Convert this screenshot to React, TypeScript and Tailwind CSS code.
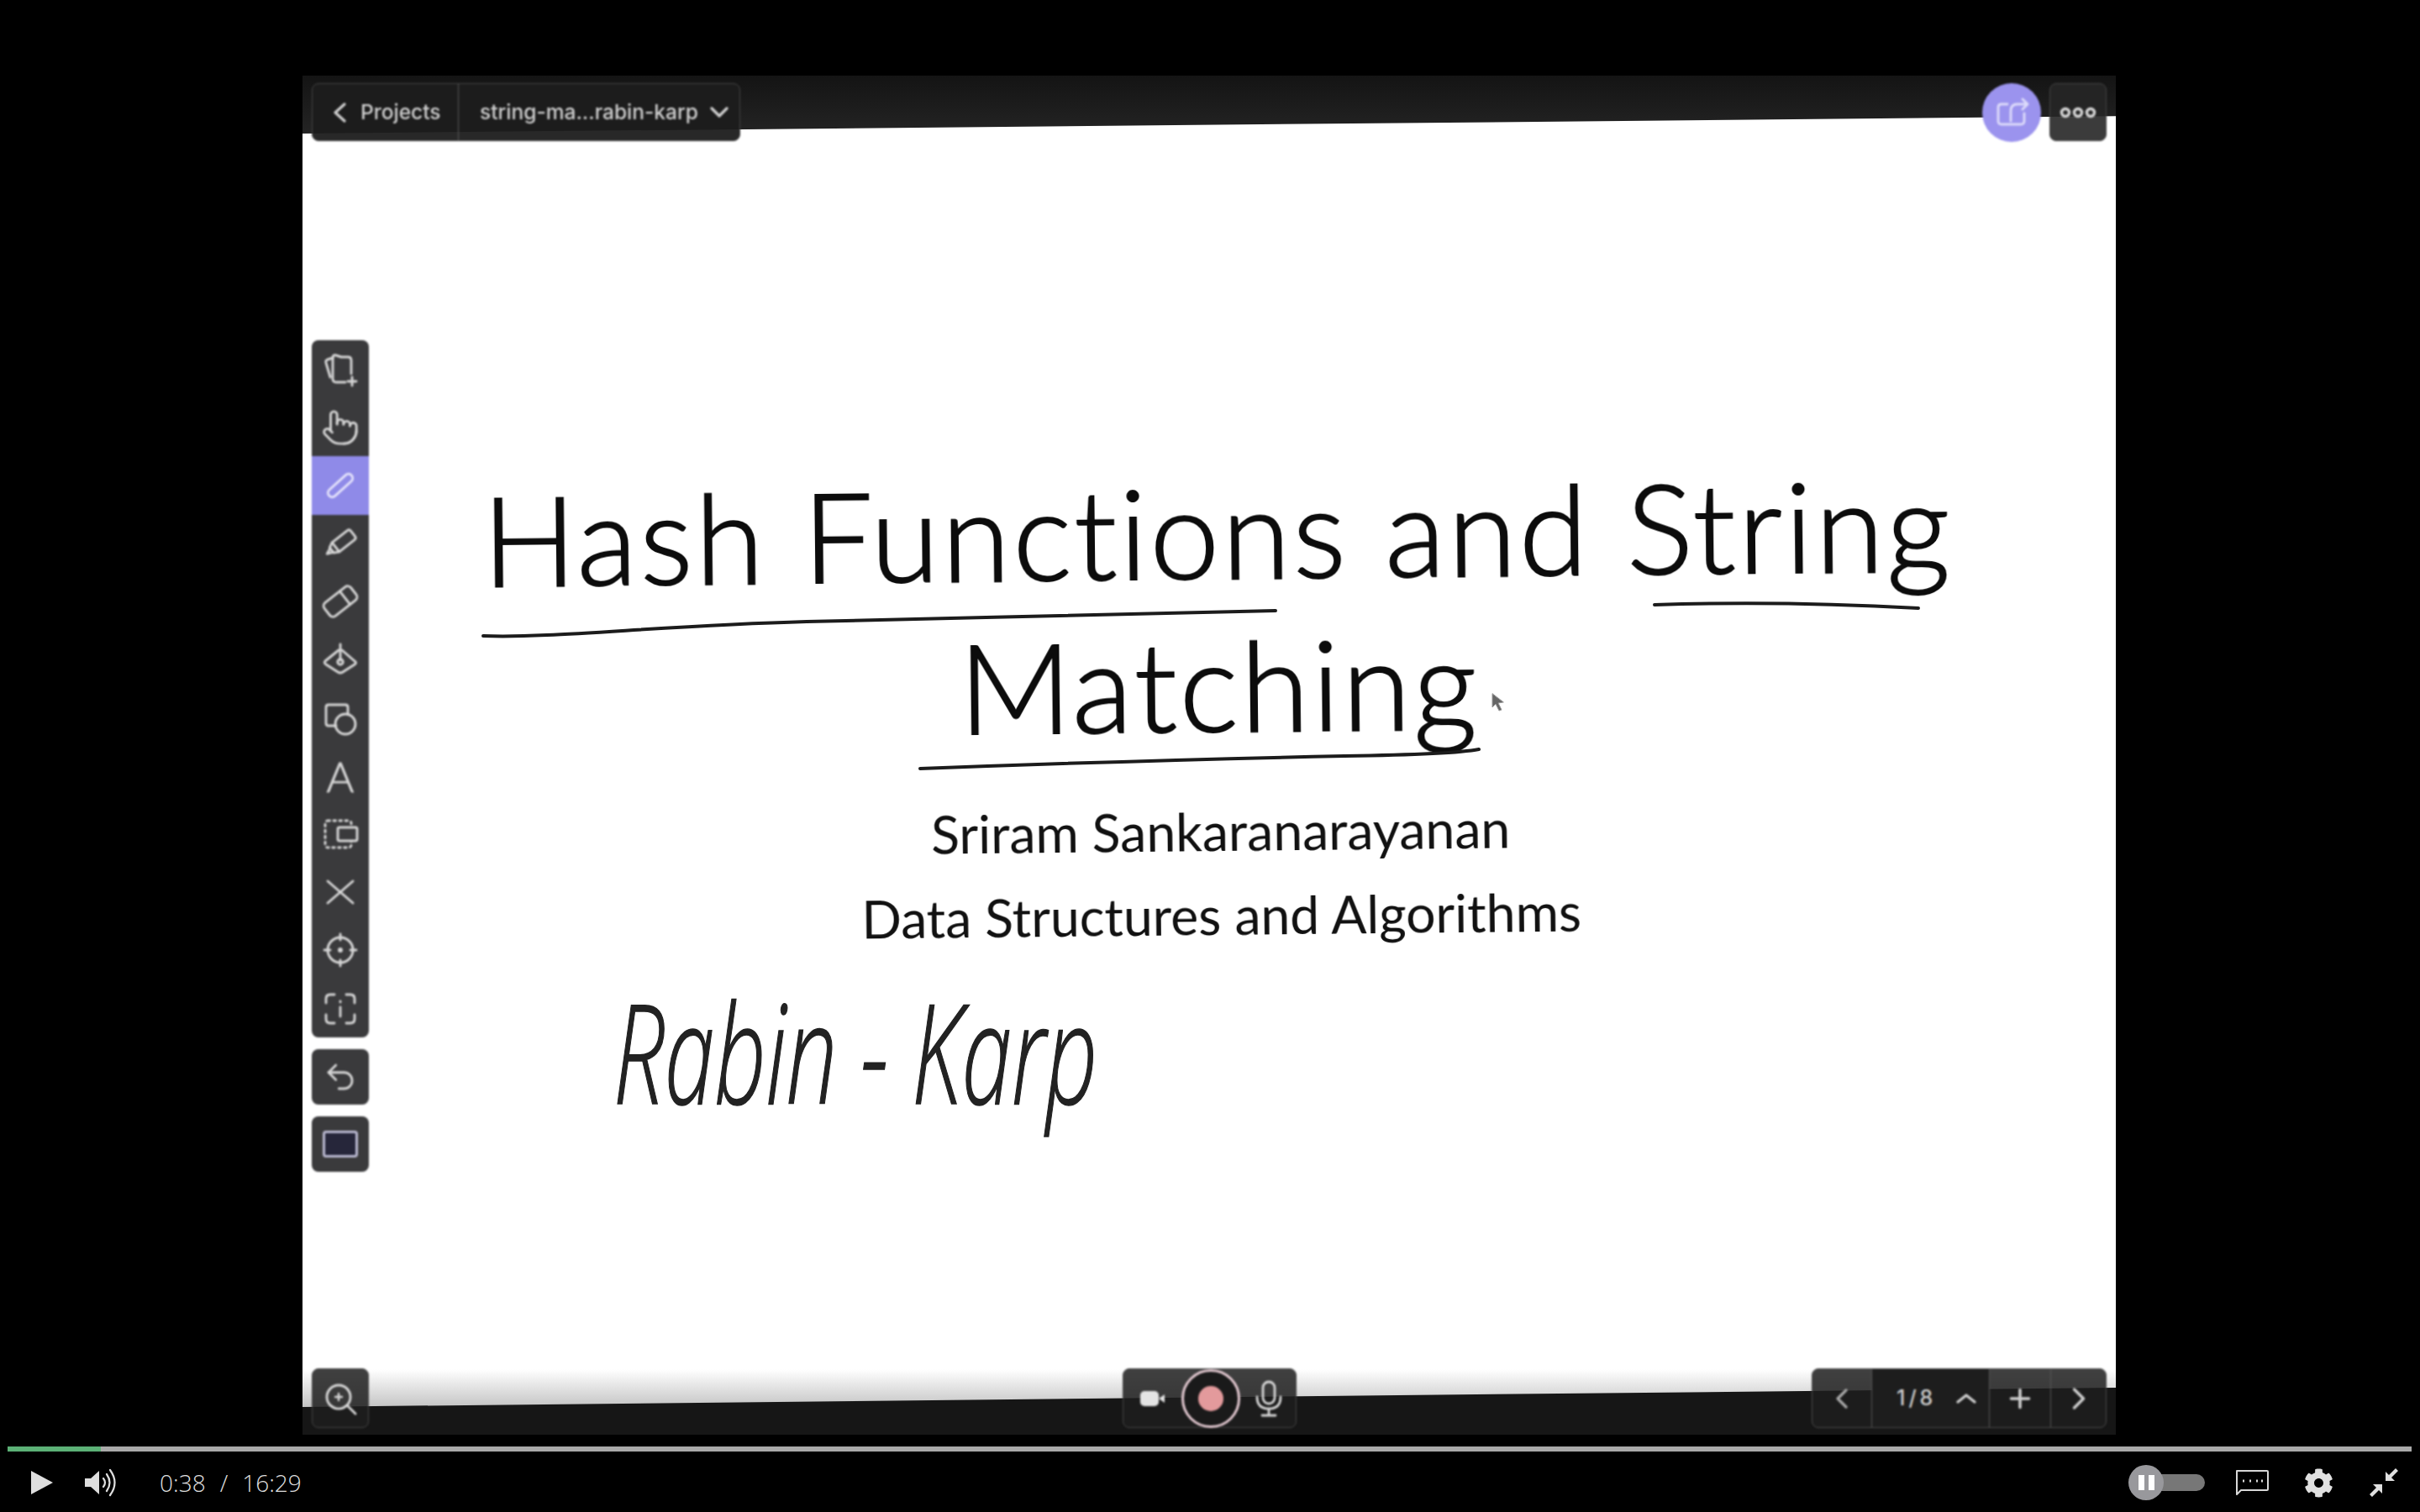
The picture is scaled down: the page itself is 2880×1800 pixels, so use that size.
import { ChevronRight, Plus, Pointer, Undo2 } from "lucide-react";
import { FaCog } from "react-icons/fa";
import type { ReactNode } from "react";

const S = ({ children }: { children: ReactNode }) => (
  <svg width="44" height="44" viewBox="0 0 44 44" fill="none" stroke="#d6d6d6" strokeWidth="2.9" strokeLinecap="round" strokeLinejoin="round">
    {children}
  </svg>
);

const Row = ({ children, active }: { children: ReactNode; active?: boolean }) => (
  <div className={`flex h-[69.2px] items-center justify-center ${active ? "bg-[#8f8ae8]" : ""}`}>{children}</div>
);

const Chev = ({ d, w, h, color = "#cfcfcf" }: { d: string; w: number; h: number; color?: string }) => (
  <svg width={w} height={h} viewBox={`0 0 ${w} ${h}`} fill="none" stroke={color} strokeWidth="3.2" strokeLinecap="round" strokeLinejoin="round">
    <path d={d} />
  </svg>
);

const tools: ReactNode[] = [
  <S>
    <path d="M13 8 L7 10 Q4 11 5 14 L10 31" />
    <path d="M13 8 Q13 4 17 5 L23 7 H31 Q35 7 35 11 V27" />
    <path d="M13 8 V33 Q13 37 17 37 H28" />
    <path d="M36 31 V41 M31 36 H41" />
  </S>,
  <Pointer size={46} strokeWidth={1.5} color="#d6d6d6" />,
  <S>
    <rect x="4" y="17" width="36" height="10" rx="5" transform="rotate(-42 22 22)" stroke="#e4e2fb" />
  </S>,
  <S>
    <g transform="rotate(-38 22 22)">
      <path d="M15 15 H38 Q41 15 41 18 V26 Q41 29 38 29 H15 L9 26 V18 Z" />
      <path d="M15 15 V29 M9 19 L2 22 L9 25" />
    </g>
  </S>,
  <S>
    <g transform="rotate(-38 22 22)">
      <rect x="2" y="12" width="40" height="20" rx="5" />
      <path d="M29 12 V32" />
    </g>
  </S>,
  <S>
    <path d="M20 10 L4 23 Q2 25 5 27 L19 36 Q22 38 25 36 L39 27 Q42 25 39 23 L24 10" />
    <path d="M22 3 V22" />
    <circle cx="22" cy="24" r="3.2" />
  </S>,
  <S>
    <path d="M17 31 H8 Q5 31 5 28 V9 Q5 6 8 6 H28 Q31 6 31 9 V17" />
    <circle cx="28" cy="29" r="12" />
  </S>,
  <span className="font-['Lato',sans-serif] text-[50px] leading-none font-light text-[#d6d6d6] [-webkit-text-stroke:0.8px_#d6d6d6]">A</span>,
  <S>
    <rect x="4" y="6" width="31" height="32" rx="3" strokeDasharray="2.5 4.5" />
    <rect x="19" y="14" width="23" height="16" rx="2" fill="#3a3a3c" />
  </S>,
  <S>
    <path d="M7 9 L37 35 M37 9 L7 35" />
  </S>,
  <S>
    <circle cx="22" cy="22" r="15" />
    <path d="M22 3 V10 M22 34 V41 M3 22 H10 M34 22 H41" />
    <circle cx="22" cy="22" r="1.5" fill="#d6d6d6" />
  </S>,
  <S>
    <path d="M5 15 V10 Q5 5 10 5 H15 M29 5 H34 Q39 5 39 10 V15 M39 29 V34 Q39 39 34 39 H29 M15 39 H10 Q5 39 5 34 V29" />
    <path d="M22 20 V31 M22 13 V14" />
  </S>,
];

function Chrome() {
  return (
    <div className="absolute inset-0 flex flex-col px-[11px] pt-[9px] pb-[8px] font-['Inter',sans-serif] blur-[0.8px]">
      <div className="flex items-start justify-between">
        <div className="flex h-[69px] w-[510px] items-center rounded-lg border border-[#444] bg-[#1c1c1c]/95 text-[24.5px] font-medium text-[#cfcfcf]">
          <div className="flex h-full w-[174px] items-center gap-[16px] border-r border-[#555] pl-[24px]">
            <Chev d="M14 2 L3 12 L14 22" w={17} h={24} />
            <span>Projects</span>
          </div>
          <div className="flex items-center gap-[14px] pl-[25px]">
            <span>string-ma...rabin-karp</span>
            <Chev d="M2 2 L11 11 L20 2" w={22} h={13} />
          </div>
        </div>
        <div className="flex items-start gap-[10px]">
          <div className="flex h-[70px] w-[70px] items-center justify-center rounded-full bg-[#9b93ee]">
            <S>
              <path d="M17 12 H10 Q6 12 6 16 V32 Q6 36 10 36 H33 Q37 36 37 32 V23" stroke="#dcdafa" />
              <path d="M21 32 V20 Q21 12 29 12 H40 M35 6 L41 12 L35 18" stroke="#dcdafa" />
            </S>
          </div>
          <div className="flex h-[69px] w-[68px] items-center justify-center rounded-lg border border-[#444] bg-[#262626]/90">
            <svg width="44" height="14" viewBox="0 0 44 14" fill="none" stroke="#d8d8d8" strokeWidth="3.4">
              <circle cx="7" cy="7" r="4.5" />
              <circle cx="22" cy="7" r="4.5" />
              <circle cx="37" cy="7" r="4.5" />
            </svg>
          </div>
        </div>
      </div>

      <div className="mt-[236px] flex w-[68px] flex-col gap-[14px]">
        <div className="overflow-hidden rounded-lg bg-[#3a3a3c]">
          {tools.map((t, i) => (
            <Row key={i} active={i === 2}>
              {t}
            </Row>
          ))}
        </div>
        <div className="flex h-[66px] items-center justify-center rounded-lg bg-[#3a3a3c]">
          <Undo2 size={42} strokeWidth={1.6} color="#d6d6d6" />
        </div>
        <div className="flex h-[66px] items-center justify-center rounded-lg bg-[#3a3a3c]">
          <div className="h-[32px] w-[42px] rounded border-[3px] border-[#b9b8d0] bg-[#26263a]" />
        </div>
      </div>

      <div className="mt-auto grid grid-cols-3 items-end">
        <div className="flex justify-start">
          <div className="flex h-[71px] w-[68px] items-center justify-center rounded-lg border border-[#444] bg-[#1d1d1d]/85">
            <S>
              <circle cx="20" cy="20" r="14" />
              <path d="M30 30 L40 40" />
              <path d="M20 16 V24 M16 20 H24" strokeWidth="2.4" />
            </S>
          </div>
        </div>
        <div className="flex justify-center">
          <div className="flex h-[71px] w-[207px] items-center rounded-lg border border-[#444] bg-[#1d1d1d]/85 pl-[20px]">
            <svg width="30" height="18" viewBox="0 0 30 18" fill="#e4e4e4">
              <rect x="0" y="0" width="22" height="18" rx="5" />
              <path d="M22 9 L29 4 V14 Z" />
            </svg>
            <div className="ml-[19px] flex h-[70px] w-[70px] shrink-0 items-center justify-center rounded-full border-[3px] border-[#e2c8d0] bg-[#1a1a1a]">
              <div className="h-[30px] w-[30px] rounded-full bg-[#e39a9c]" />
            </div>
            <svg className="ml-[17px]" width="34" height="44" viewBox="0 0 34 44" fill="none" stroke="#d6d6d6" strokeWidth="2.8" strokeLinecap="round">
              <rect x="10" y="2" width="14" height="26" rx="7" />
              <path d="M3 20 Q3 34 17 34 Q31 34 31 20 M17 34 V41 M9 42 H25" />
            </svg>
          </div>
        </div>
        <div className="flex justify-end">
          <div className="flex h-[71px] w-[351px] overflow-hidden rounded-lg border border-[#4a4a4a] bg-[#1d1d1d]/85 text-[#cfcfcf]">
            <div className="flex w-[71px] items-center justify-center border-r border-[#555]">
              <Chev d="M12 2 L2 12 L12 22" w={14} h={24} color="#a8a8a8" />
            </div>
            <div className="flex w-[140px] items-center gap-[24px] border-r border-[#555] bg-[#1d1d1d] pl-[29px] text-[25px] font-medium tracking-[4px]">
              <span>1/8</span>
              <Chev d="M2 11 L12 3 L22 11" w={24} h={14} />
            </div>
            <div className="flex w-[73px] items-center justify-center border-r border-[#555]">
              <Plus size={36} strokeWidth={2.4} />
            </div>
            <div className="flex flex-1 items-center justify-center">
              <ChevronRight size={44} strokeWidth={1.9} />
            </div>
          </div>
        </div>
      </div>
    </div>
  );
}

function Slide() {
  return (
    <div className="h-full bg-gradient-to-b from-white from-[95.2%] to-[#c4c4c4] to-[98%] pt-[451px] font-['Lato',sans-serif] text-black [font-variant-ligatures:none]">
      <div className="ml-[24px] flex -rotate-[0.6deg] flex-col items-center blur-[0.4px]">
        <div className="text-[148px] leading-[182px] font-light tracking-[3.2px] whitespace-nowrap text-[#0c0c0c] [-webkit-text-stroke:2px_#0c0c0c]">Hash Functions and String</div>
        <div className="text-[148px] leading-[182px] font-light tracking-[3.2px] whitespace-nowrap text-[#0c0c0c] [-webkit-text-stroke:2px_#0c0c0c]">Matching</div>
        <div className="mt-[34px] text-[62.5px] leading-[100px] whitespace-nowrap text-[#111]">Sriram Sankaranarayanan</div>
        <div className="text-[62.5px] leading-[100px] whitespace-nowrap text-[#111]">Data Structures and Algorithms</div>
      </div>
      <div className="mt-[26px] ml-[370px] w-fit origin-left scale-x-[0.65] font-['Open_Sans',sans-serif] text-[165px] leading-[170px] font-light whitespace-nowrap text-[#222] italic [-webkit-text-stroke:1.5px_#222]">
        Rabin - Karp
      </div>
    </div>
  );
}

export default function App() {
  return (
    <div className="flex h-[1800px] w-[2880px] flex-col overflow-hidden bg-black">
      <div className="relative mt-[90px] ml-[360px] h-[1618px] w-[2158px] shrink-0 overflow-hidden bg-white">
        <Slide />
        <div className="absolute inset-x-0 top-0 h-[69px] bg-gradient-to-b from-[#141414] to-[#242424] [clip-path:polygon(0_0,100%_0,100%_70%,0_100%)]" />
        <div className="absolute inset-x-0 bottom-0 h-[56px] bg-[#161616] [clip-path:polygon(0_100%,100%_100%,100%_0,0_41%)]" />
        <svg className="absolute inset-0" width="2158" height="1618" fill="none" stroke="#1c1c1c" strokeWidth="4" strokeLinecap="round">
          <path d="M215 667 C300 670 420 655 600 650 S1000 642 1158 637" />
          <path d="M1609 630 Q1760 625 1923 634" />
          <path d="M735 825 Q1000 815 1240 810 Q1370 808 1400 802" />
          <path d="M1416 736 L1416 752 L1420 748 L1424 756 L1427 755 L1423 747 L1429 746 Z" fill="#666" stroke="#999" strokeWidth="1" />
        </svg>
        <Chrome />
      </div>

      <div className="mt-[14px] ml-[9px] flex h-[6px] w-[2861px] shrink-0 bg-[#a9a9a9]">
        <div className="h-full w-[111px] bg-[#5cb176]" />
      </div>

      <div className="flex flex-1 items-center pt-[2px] pl-[37px] text-[#dedede]">
        <svg width="26" height="28" viewBox="0 0 26 28" fill="#dedede">
          <path d="M0 0 L26 14 L0 28 Z" />
        </svg>
        <svg className="ml-[38px]" width="38" height="34" viewBox="0 0 38 34" fill="none" stroke="#dedede" strokeWidth="2.2" strokeLinecap="round">
          <path d="M0 12 H7 L17 3 V31 L7 22 H0 Z" fill="#dedede" stroke="none" />
          <path d="M22 12 Q26 17 22 22 M26 7 Q33 17 26 27 M30 2 Q41 17 30 32" />
        </svg>
        <div className="ml-[51px] flex gap-[17px] font-['Open_Sans',sans-serif] text-[28px] font-light whitespace-pre">
          <span>0:38</span>
          <span>/</span>
          <span>16:29</span>
        </div>
        <div className="ml-auto flex items-center">
          <div className="relative flex h-[20px] w-[90px] rounded-full bg-[#777]">
            <div className="absolute top-[-11px] -left-[1px] flex h-[42px] w-[42px] items-center justify-center gap-[5px] rounded-full bg-[#98989c]">
              <div className="h-[18px] w-[7px] bg-white" />
              <div className="h-[18px] w-[7px] bg-white" />
            </div>
          </div>
          <svg className="ml-[36px]" width="40" height="30" viewBox="0 0 40 30" fill="none" stroke="#d8d8d8" strokeWidth="2">
            <path d="M2 1 H38 Q39 1 39 2 V23 Q39 24 38 24 H7 L2 29 Z" strokeLinejoin="round" />
            <path d="M9 13 H11 M17 13 H19 M25 13 H27 M31 13 H33" strokeWidth="3" />
          </svg>
          <FaCog className="ml-[42px]" size={35} color="#e0e0e0" />
          <svg className="mr-[26px] ml-[43px]" width="34" height="34" viewBox="0 0 34 34" fill="#e0e0e0">
            <path d="M31 0 L34 3 L26 11 L30 15 H19 V4 L23 8 Z" />
            <path d="M3 34 L0 31 L8 23 L4 19 H15 V30 L11 26 Z" />
          </svg>
        </div>
      </div>
    </div>
  );
}
